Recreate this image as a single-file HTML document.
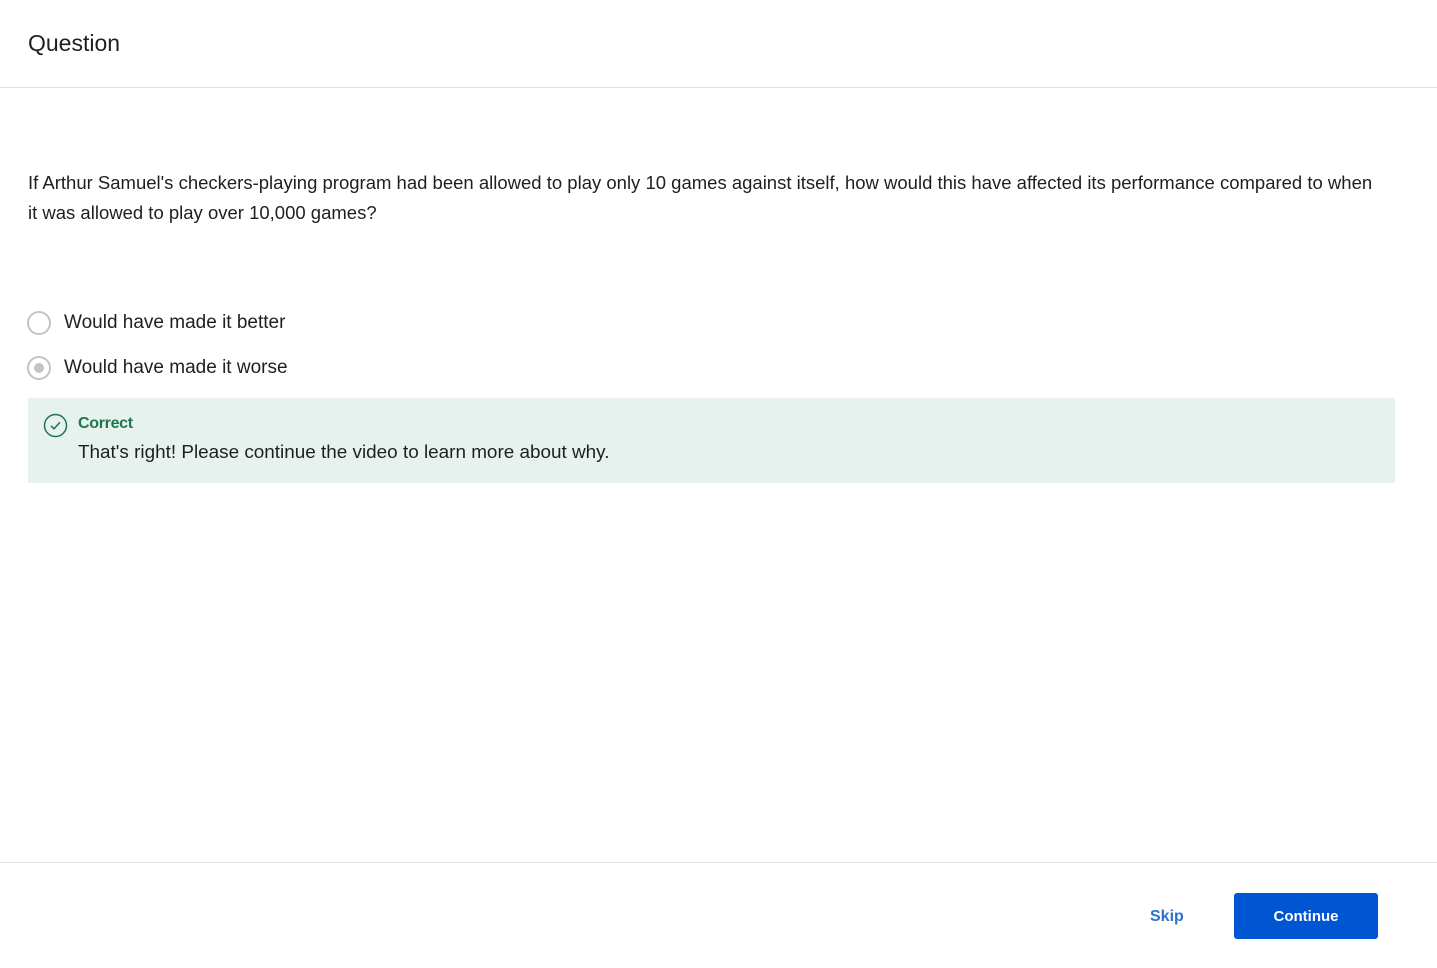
<!DOCTYPE html>
<html><head><style>
body{margin:0;width:1437px;height:968px;background:#fff;font-family:"Liberation Sans",sans-serif;color:#1f1f1f;position:relative;overflow:hidden}
.hdr{position:absolute;left:0;top:0;width:1437px;height:87px;border-bottom:1px solid #e1e1e1}
.hdr span{position:absolute;left:28px;top:30px;font-size:23px;color:#1f1f1f}
.q{position:absolute;left:28px;top:168px;width:1350px;font-size:18.5px;line-height:30px}
.opt{position:absolute;left:27px;font-size:19px}
.radio{position:absolute;left:0;top:0;width:24px;height:24px;border:2px solid #c4c4c4;border-radius:50%;box-sizing:border-box}
.opt span{position:absolute;left:37px;top:1px;white-space:nowrap;line-height:22px}
.fb{position:absolute;left:28px;top:398px;width:1367px;height:85px;background:#e7f2ee}
.fb .t{position:absolute;left:50px;top:17px;font-size:16px;font-weight:bold;color:#1e7550;letter-spacing:-0.3px}
.fb .m{position:absolute;left:50px;top:44px;font-size:18.9px}
.ftr{position:absolute;left:0;top:862px;width:1437px;border-top:1px solid #e1e1e1}
.skip{position:absolute;left:1150px;top:908px;font-size:16px;font-weight:bold;color:#2a73cc}
.btn{position:absolute;left:1234px;top:893px;width:144px;height:46px;background:#0056d2;border-radius:3px;color:#fff;font-size:15px;font-weight:bold;text-align:center;line-height:48px}
</style></head><body>
<div class="hdr"><span>Question</span></div>
<div class="q">If Arthur Samuel's checkers-playing program had been allowed to play only 10 games against itself, how would this have affected its performance compared to when<br>it was allowed to play over 10,000 games?</div>
<div class="opt" style="top:311px"><div class="radio"></div><span>Would have made it better</span></div>
<div class="opt" style="top:356px"><div class="radio"><div style="position:absolute;left:5px;top:5px;width:10px;height:10px;border-radius:50%;background:#c4c4c4"></div></div><span>Would have made it worse</span></div>
<div class="fb">
<svg style="position:absolute;left:15px;top:15px" width="25" height="25" viewBox="0 0 25 25"><circle cx="12.5" cy="12.5" r="11" fill="none" stroke="#1e7550" stroke-width="1.5"/><path d="M8 12.8l3 3 6-6.5" fill="none" stroke="#1e7550" stroke-width="1.5"/></svg>
<div class="t">Correct</div>
<div class="m">That's right! Please continue the video to learn more about why.</div>
</div>
<div class="ftr"></div>
<div class="skip">Skip</div>
<div class="btn">Continue</div>
</body></html>
